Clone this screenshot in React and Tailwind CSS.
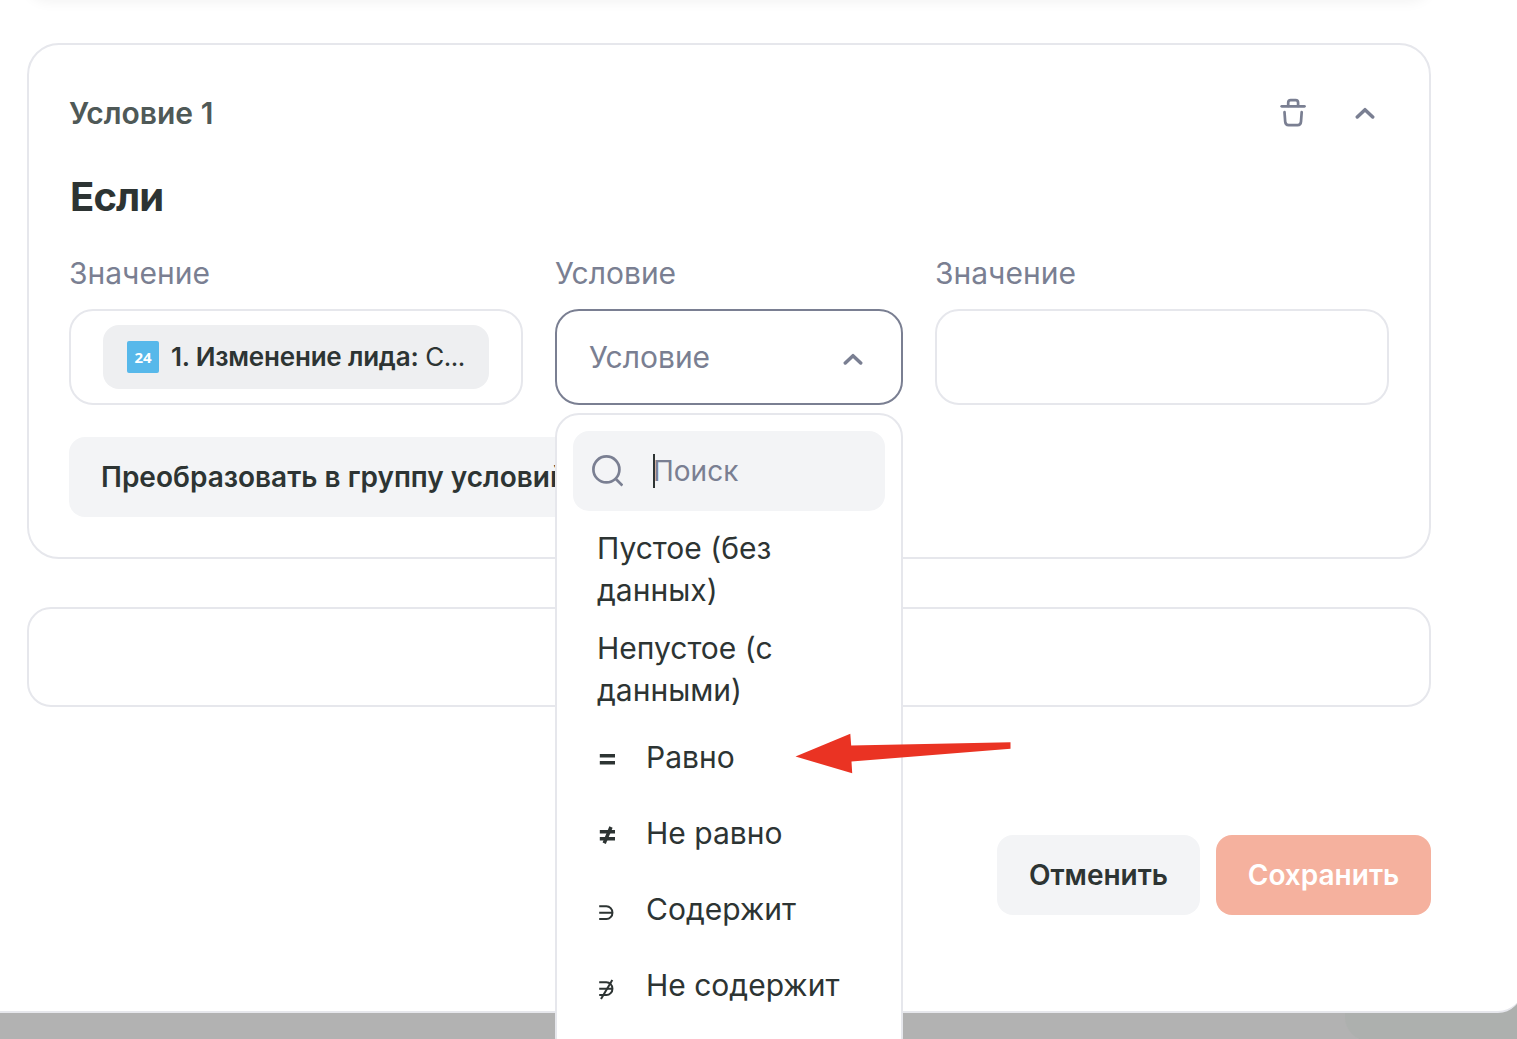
import { useState } from "react";

const OPERATORS = [
  { id: "eq", label: "Равно" },
  { id: "neq", label: "Не равно" },
  { id: "contains", label: "Содержит" },
  { id: "notContains", label: "Не содержит" },
];

function TrashIcon() {
  return (
    <svg width="32" height="32" viewBox="0 0 32 32" fill="none" stroke="currentColor" strokeWidth="2.7" strokeLinecap="round" strokeLinejoin="round">
      <path d="M4.7 9.3h22.8" />
      <path d="M11.2 9V5.7c0-1.700.8-2.500 2.500-2.500h4.900c1.700 0 2.500.8 2.500 2.500V9" />
      <path d="M7.500 15.200l.7 9.500c.2 2.500 1.200 3.500 3.400 3.500h9c2.200 0 3.200-1 3.400-3.500l.7-9.500" />
    </svg>
  );
}

function ChevronUp() {
  return (
    <svg width="20" height="12" viewBox="0 0 20 12" fill="none" stroke="currentColor" strokeWidth="3.5" strokeLinecap="round" strokeLinejoin="round">
      <path d="M2.300 10L10 2.700l7.700 7.300" />
    </svg>
  );
}

function SearchIcon() {
  return (
    <svg width="32" height="32" viewBox="0 0 32 32" fill="none" stroke="currentColor" strokeWidth="2.7">
      <circle cx="15.400" cy="14.400" r="13" />
      <path d="M24.400 23.500l7 7" />
    </svg>
  );
}

// Small glyph in front of every comparison operator
function OperatorIcon({ id }) {
  const bold = id === "eq" || id === "neq";
  return (
    <svg className="overflow-visible" width="20" height="24" viewBox="0 0 20 24" fill="none" stroke="currentColor" strokeWidth={bold ? 3.5 : 2}>
      {bold && <path d="M2.800 10.700h15.200M2.800 17.800h15.200" />}
      {id === "neq" && <path d="M14 6L7.200 22.200" />}
      {!bold && <path d="M2.200 9.300h7.200a6 6.300 0 0 1 0 12.700H2.200M2.200 15.700h13" />}
      {id === "notContains" && <path d="M15.300 7L4 26" />}
    </svg>
  );
}

function Field({ label, children }) {
  return (
    <div className="flex flex-col gap-4">
      <span className="h-10 text-[30px] leading-10 text-[#7a7f92]">{label}</span>
      {children}
    </div>
  );
}

// Dropdown list that hangs under the operator select
function OperatorMenu() {
  const [query, setQuery] = useState("");

  return (
    <div className="absolute top-[102px] -left-[2px] z-10 h-[648px] w-[348px] rounded-3xl border-2 border-[#e6e7ec] bg-white p-4 text-[30px] text-[#2d3433]">
      <div className="flex h-20 items-center rounded-2xl bg-[#f3f4f6] pl-[18px] text-[#7a7f92]">
        <SearchIcon />
        <div className="ml-[30px] h-[34px] w-[2px] bg-[#2d3433]" />
        <input
          value={query}
          onChange={(e) => setQuery(e.target.value)}
          placeholder="Поиск"
          className="-ml-[2px] w-[200px] bg-transparent text-[28px] outline-none placeholder:text-[#7a7f92]"
        />
      </div>
      <div className="px-6 pt-4 leading-[42px]">
        <div className="h-[100px]">Пустое (без данных)</div>
        <div className="h-[92px]">Непустое (с данными)</div>
        {OPERATORS.map((op) => (
          <div key={op.id} className="flex h-[76px] items-center whitespace-nowrap">
            <div className="w-[49px]">
              <OperatorIcon id={op.id} />
            </div>
            {op.label}
          </div>
        ))}
      </div>
    </div>
  );
}

export default function App() {
  return (
    <div className="relative h-[1039px] w-[1517px] overflow-hidden bg-[#b2b2b2] font-['Inter',sans-serif]">
      {/* modal */}
      <div className="relative z-10 flow-root h-[1013px] w-[1522px] rounded-br-3xl border-b-2 border-[#e6e7ec] bg-white pl-[27px]">
        <div className="w-[1404px]">
          {/* bottom edge of the previous block */}
          <div className="-mt-[43px] h-[42px] rounded-[32px] bg-white shadow-[0_2px_14px_rgba(0,0,0,0.06)]" />

          <section className="mt-11 h-[516px] rounded-[32px] border-2 border-[#e6e7ec] px-10 pt-[48px]">
            <div className="flex h-10 items-center justify-between">
              <h3 className="text-[30px] font-semibold text-[#4f5957]">Условие 1</h3>
              <div className="flex items-center gap-[46px] pr-[14px] text-[#7a7f92]">
                <TrashIcon />
                <ChevronUp />
              </div>
            </div>

            <h2 className="mt-[38px] pl-px text-[40px] leading-[52px] font-bold tracking-[-0.9px] text-[#2d3433]">Если</h2>

            <div className="mt-[30px] grid grid-cols-[454px_348px_454px] gap-8">
              <Field label="Значение">
                <div className="flex h-24 items-center rounded-3xl border-2 border-[#e6e7ec] px-8">
                  <div className="flex h-16 w-[386px] items-center rounded-2xl bg-[#eeeff1] px-6 text-[26px] text-[#2d3433]">
                    <span className="flex size-8 shrink-0 items-center justify-center rounded-[2px] bg-[#57b8ea] font-['Open_Sans',sans-serif] text-[15px] font-bold text-white">
                      24
                    </span>
                    <span className="mb-[2px] ml-3 tracking-[-0.2px] whitespace-nowrap">
                      <b className="font-semibold">1. Изменение лида:</b>
                      <span className="tracking-[-0.5px]"> С...</span>
                    </span>
                  </div>
                </div>
              </Field>

              <Field label="Условие">
                <div className="relative flex h-24 items-center justify-between rounded-3xl border-2 border-[#7a7f92] pr-[38px] pl-8 text-[30px] text-[#7a7f92]">
                  Условие
                  <span className="pt-1">
                    <ChevronUp />
                  </span>
                  <OperatorMenu />
                </div>
              </Field>

              <Field label="Значение">
                <div className="h-24 rounded-3xl border-2 border-[#e6e7ec]" />
              </Field>
            </div>

            <button className="mt-8 h-20 rounded-2xl bg-[#f3f4f6] px-8 text-[28px] font-semibold text-[#2d3433]">
              Преобразовать в группу условий
            </button>
          </section>

          <section className="mt-12 h-[100px] rounded-3xl border-2 border-[#e6e7ec]" />

          <div className="mt-32 flex justify-end gap-4 text-[28px] font-semibold">
            <button className="h-20 w-[203px] rounded-2xl bg-[#f3f4f6] text-[#2d3433]">Отменить</button>
            <button className="h-20 w-[215px] rounded-2xl bg-[#f5b19e] text-white">Сохранить</button>
          </div>
        </div>
      </div>

      {/* dimmed page under the modal */}
      <div className="-mt-10 ml-auto h-[68px] w-[172px] rounded-bl-3xl bg-[#adb0ae]" />

      {/* pointer to the "equals" option */}
      <svg className="absolute top-[730px] left-[790px] z-20" width="226" height="48" viewBox="0 0 226 48">
        <path d="M5.500 26.500L60.300 3.700l.9 11.800 159.300-3.200v6.500L61.500 31.500l.7 11.800z" fill="#ea3323" />
      </svg>
    </div>
  );
}
